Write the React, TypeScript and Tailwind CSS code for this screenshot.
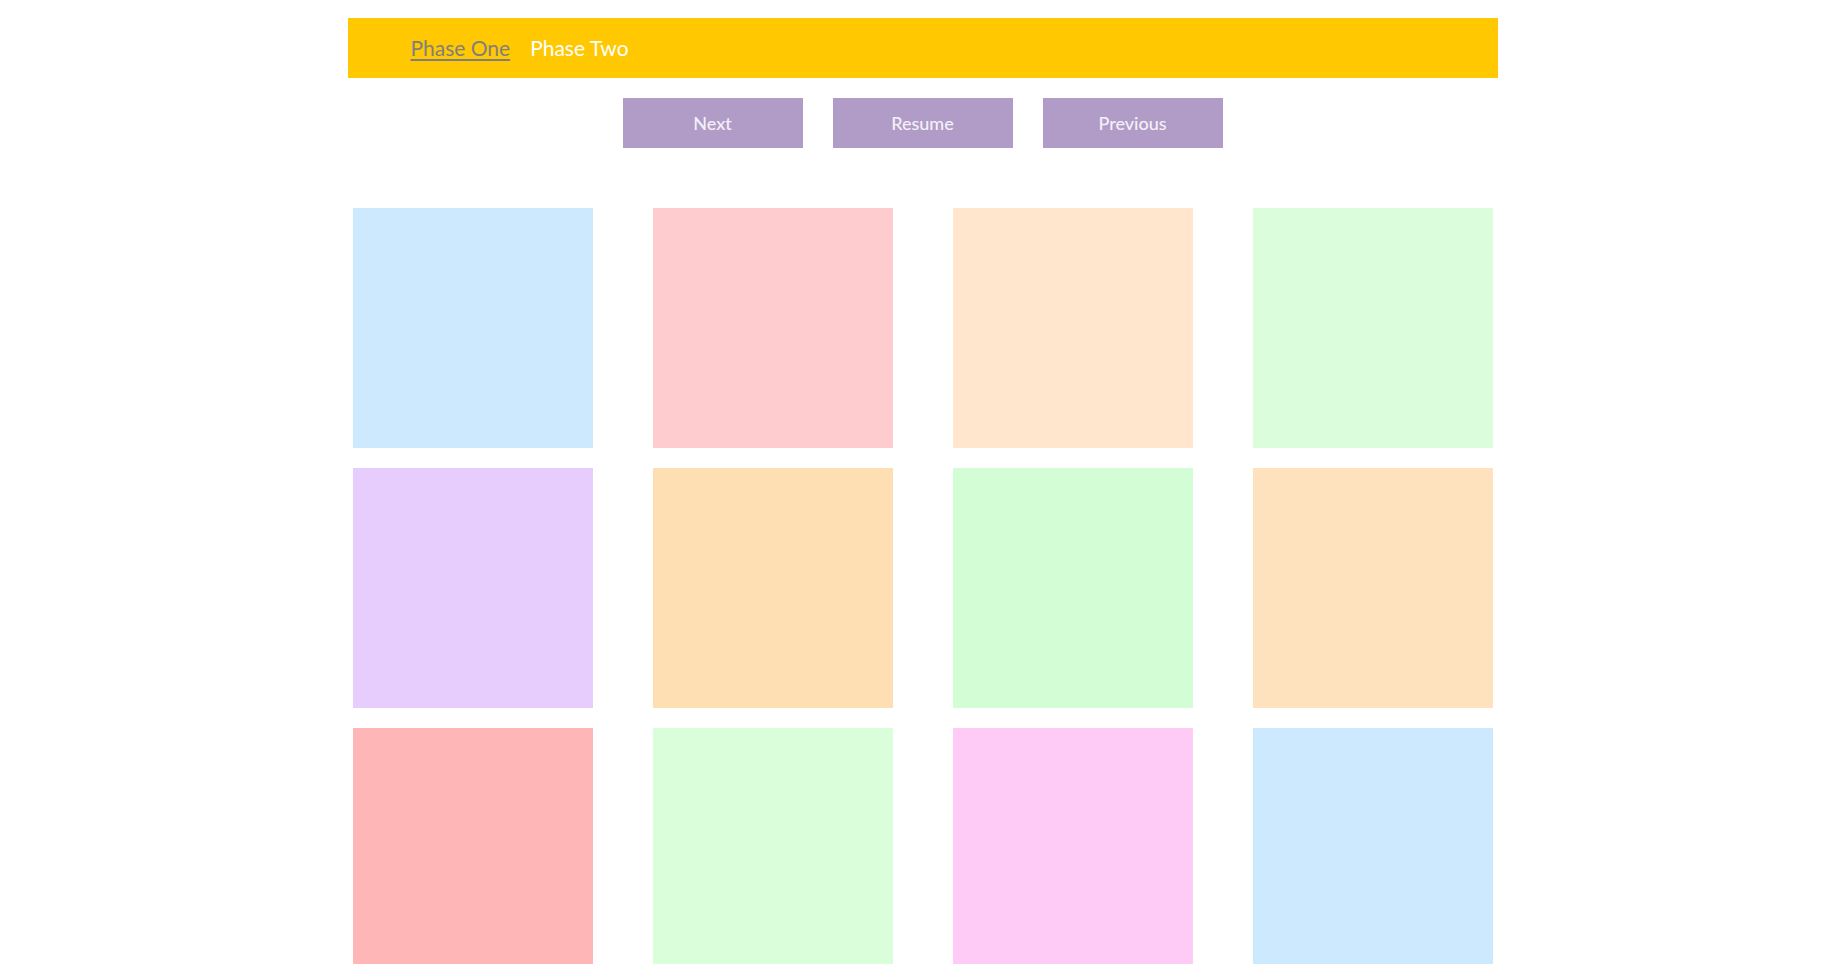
// Phase board: yellow nav strip, three action buttons and a 4-column grid of pastel tiles.
const TILES = [
  "bg-[#cce9fe]", "bg-[#feccce]", "bg-[#ffe6cc]", "bg-[#dbfddb]",
  "bg-[#e7cdfd]", "bg-[#fedfb4]", "bg-[#d3fed5]", "bg-[#fee2be]",
  "bg-[#ffb6b6]", "bg-[#dafdda]", "bg-[#fdcbf6]", "bg-[#cce9fe]",
];

const ACTIONS = ["Next", "Resume", "Previous"];

export default function App() {
  return (
    <div className="min-h-screen bg-white font-['Lato','Liberation_Sans',sans-serif]">
      <div className="mx-auto w-[1150px] pt-[18px]">
        {/* Nav strip */}
        <nav className="flex h-[60px] items-center gap-[20px] bg-[#ffc800] pl-[63px] text-[21px]">
          <a href="#" className="text-[#7f7f7f] underline underline-offset-[3px]">Phase One</a>
          <a href="#" className="text-white">Phase Two</a>
        </nav>

        {/* Actions */}
        <div className="mt-[20px] flex justify-center gap-[30px]">
          {ACTIONS.map((label) => (
            <button
              key={label}
              className="h-[50px] w-[180px] bg-[#b19cc7] text-[18px] font-medium text-[#f4f0f8]"
            >
              {label}
            </button>
          ))}
        </div>

        {/* Tile grid */}
        <div className="mt-[60px] grid grid-cols-[repeat(4,240px)] justify-between gap-y-[20px] px-[5px]">
          {TILES.map((c, i) => (
            <div key={i} className={`h-[240px] w-[240px] ${c}`} />
          ))}
        </div>
      </div>
    </div>
  );
}
